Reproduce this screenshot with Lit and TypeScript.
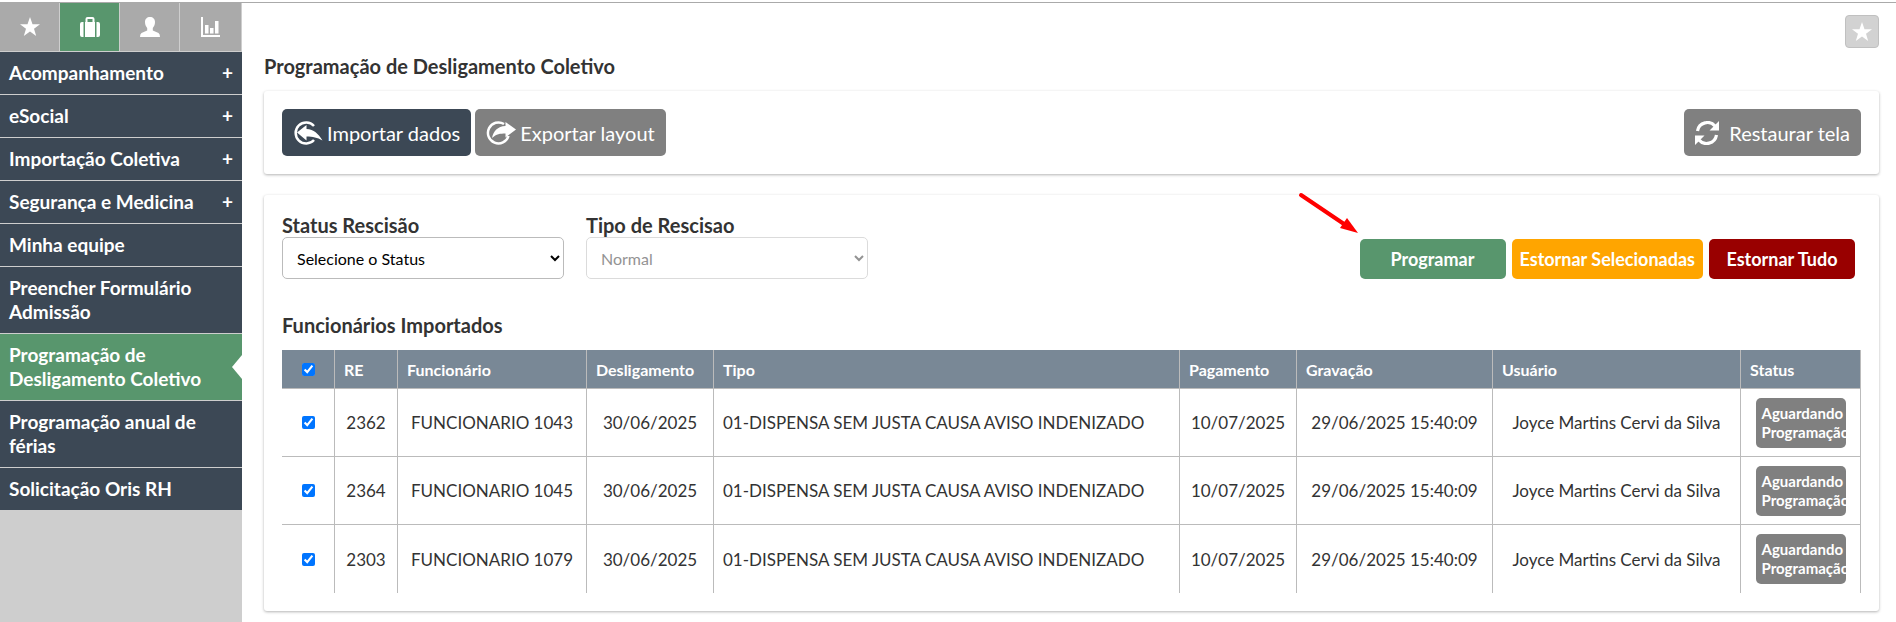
import { LitElement, html, css, svg } from "lit";
import { customElement, state } from "lit/decorators.js";

interface MenuItem {
  label: string;
  expandable?: boolean;
  active?: boolean;
}

interface Employee {
  re: string;
  name: string;
}

const MENU: MenuItem[] = [
  { label: "Acompanhamento", expandable: true },
  { label: "eSocial", expandable: true },
  { label: "Importação Coletiva", expandable: true },
  { label: "Segurança e Medicina", expandable: true },
  { label: "Minha equipe" },
  { label: "Preencher Formulário Admissão" },
  { label: "Programação de Desligamento Coletivo", active: true },
  { label: "Programação anual de férias" },
  { label: "Solicitação Oris RH" },
];

const EMPLOYEES: Employee[] = [
  { re: "2362", name: "FUNCIONARIO 1043" },
  { re: "2364", name: "FUNCIONARIO 1045" },
  { re: "2303", name: "FUNCIONARIO 1079" },
];

const star = svg`<path d="M10 0 12.500 7.200H20L14 11.800 16.200 19 10 14.600 3.800 19 6 11.800 0 7.200H7.500Z"/>`;
const suitcase = svg`<path d="M5.500 5V2Q5.500 0 7.500 0H12.500Q14.500 0 14.500 2V5H15V20H5V5ZM7.500 5H12.500V2H7.500ZM3.500 5V20H2Q0 20 0 18V7Q0 5 2 5ZM16.500 5H18Q20 5 20 7V18Q20 20 18 20H16.500Z" fill-rule="evenodd"/>`;
const user = svg`<path d="M10 0C13 0 15 2 15 5C15 8 14 9.500 12.800 11V13.500L18.500 16Q20 16.800 20 20H0Q0 16.800 1.500 16L7.200 13.500V11C6 9.500 5 8 5 5C5 2 7 0 10 0Z"/>`;
const chart = svg`<path d="M0 0H2V18H19V20H0ZM4 8H7.500V16.500H4ZM9 11H12.500V16.500H9ZM14 4H17.500V16.500H14Z"/>`;

@customElement("app-root")
export class AppRoot extends LitElement {
  @state() private tab = 1;

  static styles = css`
    :host {
      display: block;
      min-height: 100vh;
      box-sizing: border-box;
      padding-top: 2px;
      background: #fff;
      color: #333;
      font-family: Lato, "Open Sans", sans-serif;
      font-size: 17px;
    }
    * {
      box-sizing: border-box;
    }
    button,
    select {
      font-family: inherit;
    }
    button {
      border: 0;
      cursor: pointer;
    }
    svg {
      fill: currentColor;
      flex: none;
    }
    .shell {
      display: flex;
      min-height: calc(100vh - 2px);
      border-top: 1px solid #aaa;
    }
    .sidebar {
      flex: none;
      width: 242px;
      background: #cecece;
    }
    .tabs {
      display: grid;
      grid-template-columns: repeat(3, 60px) 1fr;
      height: 49px;
      border-bottom: 1px solid #cecece;
    }
    .tab {
      display: flex;
      align-items: center;
      justify-content: center;
      padding: 0;
      border-right: 1px solid #cecece;
      background: #aaa;
      color: #fff;
    }
    .tab.on {
      background: #58966d;
    }
    .menu {
      display: grid;
      gap: 1px;
      margin: 0;
      padding: 0;
      list-style: none;
    }
    .link {
      display: flex;
      position: relative;
      padding: 9px;
      background: #3c4855;
      color: #fff;
      font-size: 19px;
      font-weight: 700;
      line-height: 24px;
      text-decoration: none;
    }
    .link.on {
      background: #58966d;
    }
    .link.on::after {
      content: "";
      position: absolute;
      right: 0;
      top: calc(50% - 12px);
      border: solid transparent;
      border-width: 12px 10px 12px 0;
      border-right-color: #fff;
    }
    .label {
      flex: 1;
      padding-right: 8px;
    }
    .main {
      flex: 1;
      min-width: 0;
      padding: 12px 17px 8px 22px;
    }
    .top {
      display: flex;
      justify-content: flex-end;
    }
    .fav {
      display: flex;
      align-items: center;
      justify-content: center;
      width: 34px;
      height: 33px;
      padding: 0;
      border: 1px solid #c0c0c0;
      border-radius: 4px;
      background: #d2d2d2;
      color: #fff;
    }
    h1,
    h2 {
      margin: 0;
      font-size: 20px;
      font-weight: 700;
      line-height: 24px;
    }
    h1 {
      margin: 6px 0 13px;
    }
    .card {
      padding: 18px;
      border-radius: 3px;
      box-shadow: 0 1px 3px rgba(0, 0, 0, 0.3);
    }
    .toolbar {
      display: flex;
      gap: 4px;
      margin-bottom: 21px;
    }
    .tool {
      display: flex;
      align-items: center;
      gap: 4px;
      height: 47px;
      padding: 0 11px;
      border-radius: 5px;
      background: #808080;
      color: #fff;
      font-size: 20px;
    }
    .tool.dark {
      background: #3c4855;
    }
    .tool.end {
      gap: 10px;
      margin-left: auto;
    }
    .filters {
      display: flex;
      align-items: flex-end;
      gap: 22px;
    }
    .field {
      display: grid;
      width: 282px;
    }
    .caption {
      font-size: 20px;
      font-weight: 700;
      line-height: 24px;
    }
    select {
      height: 42px;
      padding: 0 10px;
      border: 1px solid #bbb;
      border-radius: 5px;
      background: #fff;
      color: #000;
      font-size: 16px;
    }
    select:disabled {
      border-color: #ccc;
      color: #666;
    }
    .actions {
      display: flex;
      position: relative;
      gap: 6px;
      margin-left: auto;
      padding-right: 6px;
    }
    .action {
      min-width: 146px;
      height: 40px;
      padding: 0 8px;
      border-radius: 5px;
      color: #fff;
      font-size: 18px;
      font-weight: 700;
    }
    .go {
      background: #58966d;
    }
    .some {
      background: #ffa500;
    }
    .all {
      background: #990000;
    }
    .pointer {
      position: absolute;
      right: 100%;
      bottom: 45px;
      color: #f00;
    }
    h2 {
      margin: 34px 0 13px;
    }
    table {
      width: 100%;
      border-collapse: separate;
      border-spacing: 0;
      table-layout: fixed;
    }
    th {
      height: 39px;
      padding: 0 9px;
      border-right: 1px solid #bbb;
      border-bottom: 1px solid #bbb;
      background: #798896;
      color: #fff;
      font-size: 16px;
      font-weight: 700;
      text-align: left;
      white-space: nowrap;
    }
    td {
      height: 68px;
      padding: 8px 9px;
      border-right: 1px solid #bbb;
      border-bottom: 1px solid #bbb;
      text-align: center;
      white-space: nowrap;
    }
    tr:last-child td {
      border-bottom: 0;
    }
    .left {
      text-align: left;
    }
    thead .mid {
      border-bottom: 1px solid #bbb;
      text-align: center;
    }
    thead th {
      border-bottom: 1px solid #bbb;
    }
    input {
      width: 13px;
      height: 13px;
      margin: 0;
    }
    .status {
      width: 90px;
      margin: 0 auto;
      padding: 6px;
      overflow: hidden;
      border-radius: 5px;
      background: #808080;
      color: #fff;
      font-size: 15px;
      font-weight: 700;
      line-height: 19px;
      text-align: left;
    }
    .c-check { width: 53px; }
    .c-re { width: 63px; }
    .c-name { width: 189px; }
    .c-off { width: 127px; }
    .c-pay { width: 117px; }
    .c-saved { width: 196px; }
    .c-user { width: 248px; }
    .c-status { width: 120px; }
  `;

  render() {
    const tabs = [
      ["Favoritos", star],
      ["Empresa", suitcase],
      ["Pessoal", user],
      ["Relatórios", chart],
    ] as const;
    return html`
      <div class="shell">
        <nav class="sidebar">
          <div class="tabs">
            ${tabs.map(
              ([name, icon], i) => html`<button
                class="tab ${i === this.tab ? "on" : ""}"
                aria-label=${name}
                @click=${() => (this.tab = i)}
              ><svg width="20" height="20" viewBox="0 0 20 20">${icon}</svg></button>`
            )}
          </div>
          <ul class="menu">
            ${MENU.map(
              (m) => html`<li>
                <a class="link ${m.active ? "on" : ""}" href="#"
                  ><span class="label">${m.label}</span>${m.expandable ? html`<span>+</span>` : ""}</a>
              </li>`
            )}
          </ul>
        </nav>
        <main class="main">
          <div class="top">
            <button class="fav" aria-label="Favoritar">
              <svg width="20" height="20" viewBox="0 0 20 20">${star}</svg>
            </button>
          </div>
          <h1>Programação de Desligamento Coletivo</h1>
          <section class="card toolbar">
            <button class="tool dark">
              <svg width="30" height="24" viewBox="0 0 30 24">
                <path d="M21 5A10.500 10.500 0 1 0 21 19" fill="none" stroke="currentColor" stroke-width="2.500"/>
                <path d="M4 11.500 13.500 4V8C21 8.500 25 12.500 29.500 19.500C24 16.500 20 15.500 13.500 15.500V19.500Z"/>
              </svg>
              Importar dados
            </button>
            <button class="tool">
              <svg width="30" height="24" viewBox="0 0 30 24">
                <path d="M18 3A10.500 10.500 0 1 0 22.500 15" fill="none" stroke="currentColor" stroke-width="2.500"/>
                <path d="M30 8.500 19.500 1V5C11.500 5.500 7.500 10 6 17C10.500 13 14 12.500 19.500 12.500V16.500Z"/>
              </svg>
              Exportar layout
            </button>
            <button class="tool end">
              <svg width="24" height="24" viewBox="0 0 24 24">
                <path d="M2.500 10C4 1 15 -1 20 5M21.500 14C20 23 9 25 4 19" fill="none" stroke="currentColor" stroke-width="3.200"/>
                <path d="M24 0V9.500H14.500ZM0 24V14.500H9.500Z"/>
              </svg>
              Restaurar tela
            </button>
          </section>
          <section class="card">
            <div class="filters">
              <div class="field">
                <label class="caption" for="status">Status Rescisão</label>
                <select id="status"><option>Selecione o Status</option></select>
              </div>
              <div class="field">
                <label class="caption" for="tipo">Tipo de Rescisao</label>
                <select id="tipo" disabled><option>Normal</option></select>
              </div>
              <div class="actions">
                <svg class="pointer" width="62" height="42" viewBox="0 0 62 42">
                  <path d="M3 3 46 32" fill="none" stroke="currentColor" stroke-width="4" stroke-linecap="round"/>
                  <path d="M60 41 49 26 42 36Z"/>
                </svg>
                <button class="action go">Programar</button>
                <button class="action some">Estornar Selecionadas</button>
                <button class="action all">Estornar Tudo</button>
              </div>
            </div>
            <h2>Funcionários Importados</h2>
            <table>
              <colgroup>
                <col class="c-check" /><col class="c-re" /><col class="c-name" /><col class="c-off" /><col />
                <col class="c-pay" /><col class="c-saved" /><col class="c-user" /><col class="c-status" />
              </colgroup>
              <thead>
                <tr>
                  <th class="mid"><input type="checkbox" aria-label="Selecionar todos" checked /></th>
                  ${["RE", "Funcionário", "Desligamento", "Tipo", "Pagamento", "Gravação", "Usuário", "Status"].map(
                    (h) => html`<th>${h}</th>`
                  )}
                </tr>
              </thead>
              <tbody>
                ${EMPLOYEES.map(
                  (e) => html`<tr>
                    <td><input type="checkbox" aria-label="Selecionar ${e.re}" checked /></td>
                    <td>${e.re}</td>
                    <td>${e.name}</td>
                    <td>30/06/2025</td>
                    <td class="left">01-DISPENSA SEM JUSTA CAUSA AVISO INDENIZADO</td>
                    <td>10/07/2025</td>
                    <td>29/06/2025 15:40:09</td>
                    <td>Joyce Martins Cervi da Silva</td>
                    <td><div class="status">Aguardando<br />Programação</div></td>
                  </tr>`
                )}
              </tbody>
            </table>
          </section>
        </main>
      </div>
    `;
  }
}
